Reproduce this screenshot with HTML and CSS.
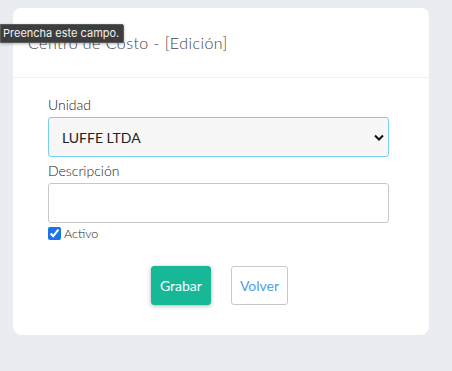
FILE: index.html
```html
<!DOCTYPE html>
<html lang="es">
<head>
<meta charset="UTF-8">
<meta name="viewport" content="width=device-width, initial-scale=1.0">
<title>Centro de Costo</title>
<link rel="stylesheet" href="styles.css">
</head>
<body>
    <div class="card">
        <div class="card-header">
            <h5 class="card-title">Centro de Costo - [Edición]</h5>
        </div>
        <form class="card-body" id="formCentro">
            <label class="field-label" for="unidad">Unidad</label>
            <select class="field field-select" id="unidad" name="unidad">
                <option value="1">LUFFE LTDA</option>
            </select>

            <label class="field-label" for="descripcion">Descripción</label>
            <input class="field" type="text" id="descripcion" name="descripcion" required>

            <div class="check-row">
                <input type="checkbox" id="activo" name="activo" checked>
                <label for="activo">Activo</label>
            </div>

            <div class="actions">
                <button type="submit" class="btn btn-save">Grabar</button>
                <button type="button" class="btn btn-back">Volver</button>
            </div>
        </form>
    </div>

    <div class="tooltip">Preencha este campo.</div>
</body>
</html>
```

FILE: styles.css
```css
body {
    margin: 0;
    padding: 8px 23px 0 13px;
    background-color: #e9edf2;
    font-family: Lato, "Noto Sans", sans-serif;
    color: #333;
}
.card {
    background-color: #fff;
    border-radius: 8px;
    height: 327px;
    box-shadow: 0 1px 1px rgba(0, 0, 0, 0.04);
}
.card-header {
    height: 70px;
    box-sizing: border-box;
    border-bottom: 1px solid #eef0f2;
    padding: 25px 15px 0 15px;
}
.card-title {
    margin: 0;
    font-size: 16px;
    font-weight: 300;
    color: #444;
    letter-spacing: 0.45px;
}
.card-body {
    display: flex;
    flex-direction: column;
    padding: 18px 40px 0 35px;
}
.field-label {
    font-size: 14px;
    font-weight: 300;
    color: #222;
    margin-bottom: 4px;
}
.field {
    box-sizing: border-box;
    width: 100%;
    height: 40px;
    border: 1px solid #c8c8c8;
    border-radius: 3px;
    background-color: #fff;
    font-family: inherit;
    font-size: 14px;
    margin-bottom: 5px;
}
.field-select {
    background-color: #f7f7f7;
    border-color: #77d0f2;
    padding: 0 10px 0 13px;
    color: #222;
    appearance: none;
    background-image: url("data:image/svg+xml,%3Csvg xmlns='http://www.w3.org/2000/svg' width='10' height='7' viewBox='0 0 10 7'%3E%3Cpath d='M1 1.5l4 4 4-4' fill='none' stroke='%23111' stroke-width='2'/%3E%3C/svg%3E");
    background-repeat: no-repeat;
    background-position: right 4px center;
}
.check-row {
    display: flex;
    align-items: center;
    gap: 3px;
    font-size: 12.5px;
    font-weight: 300;
    color: #222;
    margin-top: -2px;
}
.check-row input {
    margin: 0;
    width: 13px;
    height: 13px;
    accent-color: #1a73e8;
}
.actions {
    display: flex;
    justify-content: center;
    gap: 20px;
    margin-top: 25px;
    padding-left: 2px;
}
.btn {
    height: 39px;
    padding: 0 8px;
    border-radius: 3px;
    font-family: inherit;
    font-size: 14px;
    cursor: pointer;
}
.btn-save {
    background-color: #17b897;
    border: 1px solid #17b897;
    color: #fff;
    box-shadow: 0 1px 4px rgba(0, 0, 0, 0.3);
}
.btn-back {
    background-color: #fff;
    border: 1px solid #c8c8c8;
    color: #4b9fea;
}
.tooltip {
    position: absolute;
    top: 24px;
    left: 0;
    background-color: #3d3d3d;
    border: 1px solid #5a5a5a;
    color: #f2f2f2;
    font-family: Inter, sans-serif;
    font-size: 11px;
    padding: 1px 4px 2px 2px;
    border-radius: 0 2px 2px 0;
    box-shadow: 0 1px 3px rgba(0, 0, 0, 0.3);
}
```
